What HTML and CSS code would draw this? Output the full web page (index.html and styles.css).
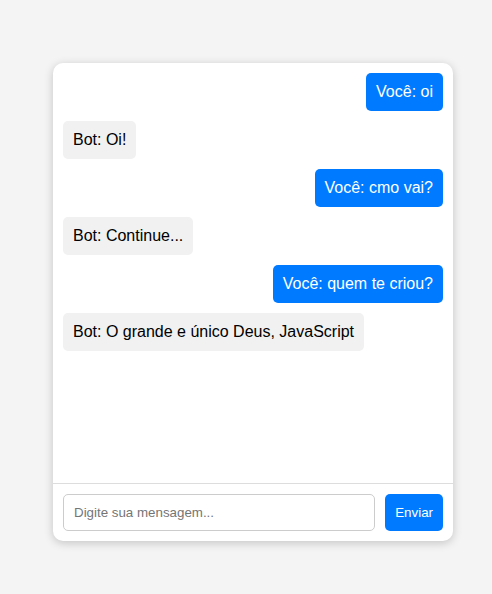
FILE: index.html
```html
<!DOCTYPE html>
<html lang="pt">
<head>
<meta charset="utf-8">
<title>Chat</title>
<link rel="stylesheet" href="styles.css">
</head>
<body>
<div class="chat-card">
  <div class="messages">
    <div class="msg user">Você: oi</div>
    <div class="msg bot">Bot: Oi!</div>
    <div class="msg user">Você: cmo vai?</div>
    <div class="msg bot">Bot: Continue...</div>
    <div class="msg user">Você: quem te criou?</div>
    <div class="msg bot">Bot: O grande e único Deus, JavaScript</div>
  </div>
  <div class="input-bar">
    <input class="text-input" type="text" placeholder="Digite sua mensagem...">
    <button class="send-btn">Enviar</button>
  </div>
</div>
</body>
</html>
```

FILE: styles.css
```css
html, body {
  margin: 0;
  padding: 0;
}
body {
  background: #f4f4f4;
  font-family: "Liberation Sans", Arial, sans-serif;
  height: 594px;
}
.chat-card {
  width: 400px;
  margin: 63px 0 0 53px;
  background: #fff;
  border-radius: 10px;
  box-shadow: 0 2px 10px rgba(0, 0, 0, 0.2);
  display: flex;
  flex-direction: column;
  overflow: hidden;
}
.messages {
  height: 420px;
  box-sizing: border-box;
  padding: 10px;
  display: flex;
  flex-direction: column;
  align-items: flex-start;
  gap: 10px;
}
.msg {
  font-size: 16px;
  line-height: 18px;
  padding: 10px;
  border-radius: 5px;
}
.msg.user {
  align-self: flex-end;
  background: #007bff;
  color: #fff;
}
.msg.bot {
  background: #f1f1f1;
  color: #000;
}
.input-bar {
  border-top: 1px solid #ddd;
  padding: 10px;
  display: flex;
  gap: 10px;
}
.text-input {
  flex: 1;
  height: 37px;
  box-sizing: border-box;
  border: 1px solid #ccc;
  border-radius: 5px;
  padding: 0 10px;
  font-family: "Liberation Sans", Arial, sans-serif;
  font-size: 13.333px;
  color: #333;
  outline: none;
}
.text-input::placeholder {
  color: #757575;
}
.send-btn {
  height: 37px;
  border: none;
  border-radius: 5px;
  background: #007bff;
  color: #fff;
  font-family: "Liberation Sans", Arial, sans-serif;
  font-size: 13.333px;
  padding: 0 10px;
}
```
